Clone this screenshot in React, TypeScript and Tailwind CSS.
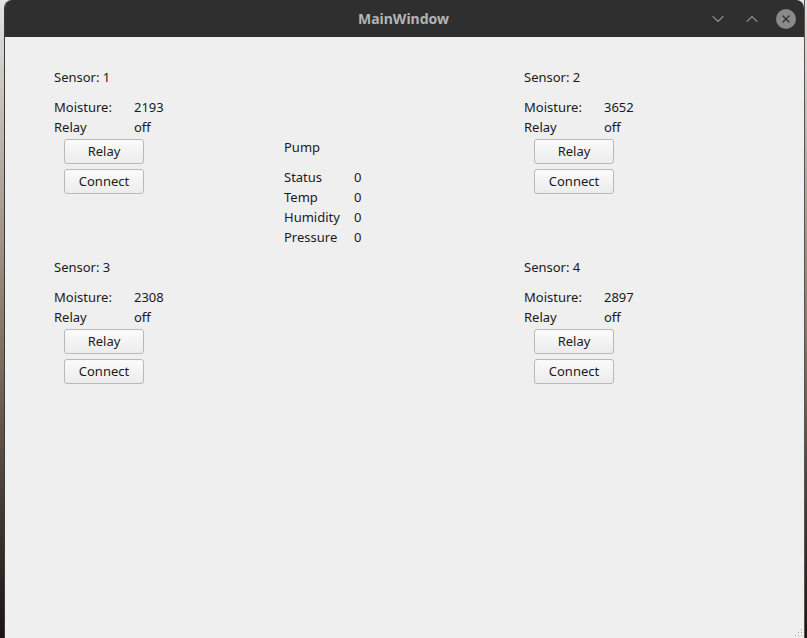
import { ChevronDown, ChevronUp, X } from 'lucide-react';

type Sensor = { id: number; moisture: number; relay: string };

const sensors: Sensor[] = [
  { id: 1, moisture: 2193, relay: 'off' },
  { id: 2, moisture: 3652, relay: 'off' },
  { id: 3, moisture: 2308, relay: 'off' },
  { id: 4, moisture: 2897, relay: 'off' },
];

const pump = [
  ['Status', '0'],
  ['Temp', '0'],
  ['Humidity', '0'],
  ['Pressure', '0'],
];

function QtButton({ label }: { label: string }) {
  return (
    <button className="w-[80px] h-[25px] ml-[10px] rounded-[3px] border border-[#b9b9b9] bg-gradient-to-b from-[#fbfbfb] to-[#ececec] text-[13px] text-[#1a1a1a] leading-none">
      {label}
    </button>
  );
}

function SensorPanel({ sensor }: { sensor: Sensor }) {
  return (
    <div className="flex flex-col">
      <div className="h-[20px] leading-[20px]">Sensor: {sensor.id}</div>
      <div className="mt-[10px] flex h-[20px] leading-[20px]">
        <span className="w-[80px]">Moisture:</span>
        <span>{sensor.moisture}</span>
      </div>
      <div className="flex h-[20px] leading-[20px]">
        <span className="w-[80px]">Relay</span>
        <span>{sensor.relay}</span>
      </div>
      <div className="mt-[2px] flex flex-col gap-[5px]">
        <QtButton label="Relay" />
        <QtButton label="Connect" />
      </div>
    </div>
  );
}

export default function App() {
  return (
    <div className="flex w-[807px] h-[638px] bg-gradient-to-b from-[#e4e4e4] via-[#8a7a6a] to-[#1a1414] font-['Noto_Sans',sans-serif] overflow-hidden">
      <div className="w-[4px] shrink-0" />
      <div className="w-[800px] flex flex-col rounded-t-[8px] overflow-hidden border-l border-[#3a3a3a] bg-[#efefef]">
        {/* Title bar */}
        <div className="h-[37px] shrink-0 bg-[#2f2f2f] flex items-center relative">
          <span className="flex-1 text-center text-[14px] font-bold text-[#b4b4b4] pr-[2px]">MainWindow</span>
          <div className="absolute right-[8px] top-[9px] flex items-center gap-[14px]">
            <ChevronDown size={20} strokeWidth={1.3} className="text-[#8c8c8c]" />
            <ChevronUp size={20} strokeWidth={1.3} className="text-[#8c8c8c]" />
            <div className="w-[20px] h-[20px] rounded-full bg-[#8a8a8a] flex items-center justify-center">
              <X size={12} strokeWidth={2.5} className="text-[#2f2f2f]" />
            </div>
          </div>
        </div>

        {/* Content */}
        <div className="flex-1 relative text-[13px] text-[#1a1a1a] pl-[49px] pt-[30px]">
          <div className="flex">
            <div className="w-[230px] flex flex-col gap-[63px]">
              <SensorPanel sensor={sensors[0]} />
              <SensorPanel sensor={sensors[2]} />
            </div>
            <div className="w-[240px] pt-[70px]">
              <div className="h-[20px] leading-[20px]">Pump</div>
              <div className="mt-[10px] flex flex-col">
                {pump.map(([k, v]) => (
                  <div key={k} className="flex h-[20px] leading-[20px]">
                    <span className="w-[70px]">{k}</span>
                    <span>{v}</span>
                  </div>
                ))}
              </div>
            </div>
            <div className="flex flex-col gap-[63px]">
              <SensorPanel sensor={sensors[1]} />
              <SensorPanel sensor={sensors[3]} />
            </div>
          </div>
          {/* resize grip */}
          <div className="absolute right-[2px] bottom-[2px] grid grid-cols-3 gap-[2px]">
            {[0, 1, 2, 3, 4, 5, 6, 7, 8].map((i) => (
              <span
                key={i}
                className={`w-[1px] h-[1px] ${i === 0 || i === 1 || i === 3 ? 'bg-transparent' : 'bg-[#a8a8a8]'}`}
              />
            ))}
          </div>
        </div>
      </div>
      <div className="flex-1 border-l border-[#555]" />
    </div>
  );
}
